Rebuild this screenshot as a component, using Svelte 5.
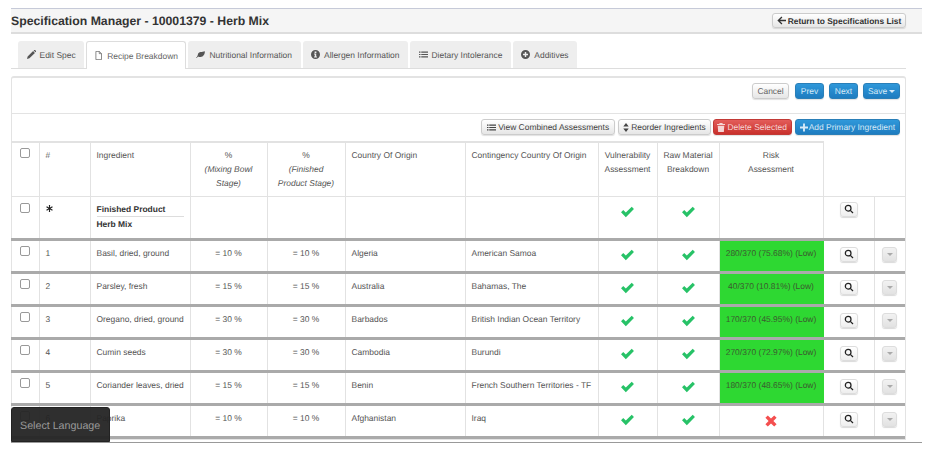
<script>
  const rows = [
    { n: 1, name: 'Basil, dried, ground', p: 10, c: 'Algeria', cc: 'American Samoa', risk: '280/370 (75.68%) (Low)' },
    { n: 2, name: 'Parsley, fresh', p: 15, c: 'Australia', cc: 'Bahamas, The', risk: '40/370 (10.81%) (Low)' },
    { n: 3, name: 'Oregano, dried, ground', p: 30, c: 'Barbados', cc: 'British Indian Ocean Territory', risk: '170/370 (45.95%) (Low)' },
    { n: 4, name: 'Cumin seeds', p: 30, c: 'Cambodia', cc: 'Burundi', risk: '270/370 (72.97%) (Low)' },
    { n: 5, name: 'Coriander leaves, dried', p: 15, c: 'Benin', cc: 'French Southern Territories - TF', risk: '180/370 (48.65%) (Low)' },
    { n: 6, name: 'Paprika', p: 10, c: 'Afghanistan', cc: 'Iraq', risk: null }
  ];
  const tabs = [
    { label: 'Edit Spec', icon: 'pencil' },
    { label: 'Recipe Breakdown', icon: 'file', active: true },
    { label: 'Nutritional Information', icon: 'leaf' },
    { label: 'Allergen Information', icon: 'info' },
    { label: 'Dietary Intolerance', icon: 'list' },
    { label: 'Additives', icon: 'plus' }
  ];
</script>

{#snippet check()}
  <svg class="check" viewBox="0 0 16 13"><path d="M1 6.8 3.4 4.3 6.2 7.1 12.6.8 15 3.3 6.2 12.2Z" /></svg>
{/snippet}
{#snippet search()}
  <svg class="search" viewBox="0 0 12 12"><circle cx="5" cy="5" r="3.4" /><path d="M7.6 7.6 10.8 10.8" /></svg>
{/snippet}
{#snippet list()}
  <svg class="ico" viewBox="0 0 12 10"><path d="M0 1h2v1.5H0zM3 1h9v1.5H3zM0 4.2h2v1.5H0zM3 4.2h9v1.5H3zM0 7.4h2v1.5H0zM3 7.4h9v1.5H3z" /></svg>
{/snippet}
{#snippet tabIcon(name)}
  {#if name === 'pencil'}
    <svg class="ico" viewBox="0 0 10 10"><path d="M0 10 .7 7.3 6.8 1.2 8.8 3.2 2.7 9.3ZM7.4.6 8 0a.8.8 0 0 1 1 0l1 1a.8.8 0 0 1 0 1l-.6.6Z" /></svg>
  {:else if name === 'file'}
    <svg class="ico line" viewBox="0 0 10 12"><path d="M1.5.5h4.5L9 3.5v8H1.5ZM6 .5v3h3" /></svg>
  {:else if name === 'leaf'}
    <svg class="ico" viewBox="0 0 12 9"><path d="M0 8.5C2 7.5 2 6 2.6 4 3.6.8 8 1.5 11.8.3 12 4 10 8 5.6 7.8 4.5 7.8 3.5 7.3 3 7 2.4 7.6 1.2 8.7.4 9Z" /></svg>
  {:else if name === 'info'}
    <svg class="ico" viewBox="0 0 10 10"><path fill-rule="evenodd" d="M5 0a5 5 0 1 1 0 10A5 5 0 0 1 5 0ZM4 1.6v1.6h2V1.6ZM3.4 4v1h.8v2.2h-.8v1h3.2v-1h-.8V4Z" /></svg>
  {:else if name === 'list'}
    {@render list()}
  {:else}
    <svg class="ico" viewBox="0 0 10 10"><path fill-rule="evenodd" d="M5 0a5 5 0 1 1 0 10A5 5 0 0 1 5 0ZM4.2 2.2v2H2.2v1.6h2v2h1.6v-2h2V4.2h-2v-2Z" /></svg>
  {/if}
{/snippet}

<div class="page">
  <header class="head">
    <h1>Specification Manager - 10001379 - Herb Mix</h1>
    <button class="btn ret"><svg class="ico" viewBox="0 0 10 10"><path d="M5 .6 6 1.6 3.4 4.2H10v1.6H3.4L6 8.4 5 9.4.4 5Z" /> </svg> Return to Specifications List</button>
  </header>

  <nav class="tabs">
    {#each tabs as t}
      <div class="tab" class:active={t.active}>{@render tabIcon(t.icon)}{t.label}</div>
    {/each}
  </nav>

  <section class="panel">
    <div class="bar one">
      <button class="btn cancel">Cancel</button>
      <button class="btn blue prev">Prev</button>
      <button class="btn blue next">Next</button>
      <button class="btn blue save">Save <span class="caret"></span></button>
    </div>
    <div class="bar two">
      <button class="btn view">{@render list()} View Combined Assessments</button>
      <button class="btn slim reorder"><svg class="ico sort" viewBox="0 0 6 10"><path d="M3 0 6 3.8H0ZM3 10 0 6.2H6Z" /></svg> Reorder Ingredients</button>
      <button class="btn red slim del"><svg class="ico small" viewBox="0 0 9 10"><path d="M3 0h3l.6 1H9v1.2H0V1h2.4ZM.8 3h7.4l-.5 7H1.3Z" /></svg> Delete Selected</button>
      <button class="btn blue slim tight"><svg class="ico small" viewBox="0 0 10 10"><path d="M3.8 0h2.4v3.8H10v2.4H6.2V10H3.8V6.2H0V3.8h3.8Z" /></svg> Add Primary Ingredient</button>
    </div>

    <table>
      <colgroup>
        <col class="w28" /><col class="w51" /><col class="w100" /><col class="w77" />
        <col class="w78" /><col class="w120" /><col class="w133" /><col class="w59" />
        <col class="w62" /><col class="w104" /><col class="w51" /><col class="w31" />
      </colgroup>
      <thead>
        <tr class="hr">
          <th><span class="cb"></span></th>
          <th>#</th>
          <th>Ingredient</th>
          <th class="c">%<br /><em>(Mixing Bowl<br />Stage)</em></th>
          <th class="c">%<br /><em>(Finished<br />Product Stage)</em></th>
          <th>Country Of Origin</th>
          <th>Contingency Country Of Origin</th>
          <th class="c">Vulnerability<br />Assessment</th>
          <th class="c nar">Raw Material<br />Breakdown</th>
          <th class="c">Risk<br />Assessment</th>
          <th class="notop"></th>
          <th class="notop"></th>
        </tr>
      </thead>
      <tbody>
        <tr class="fin">
          <td><span class="cb"></span></td>
          <td><svg class="star" viewBox="0 0 10 10"><path d="M4.1 0h1.8l-.2 3.6L8.8 1.7l.9 1.6-3.2 1.7 3.2 1.7-.9 1.6-3.1-1.9.2 3.6H4.1l.2-3.6-3.1 1.9-.9-1.6L3.5 5 .3 3.3l.9-1.6 3.1 1.9Z" /></svg></td>
          <td class="bold"><div class="fp">Finished Product</div><div>Herb Mix</div></td>
          <td></td><td></td><td></td><td></td>
          <td class="c">{@render check()}</td>
          <td class="c">{@render check()}</td>
          <td></td>
          <td class="c"><button class="sq">{@render search()}</button></td>
          <td></td>
        </tr>
        {#each rows as r}
          <tr class="row">
            <td><span class="cb"></span></td>
            <td>{r.n}</td>
            <td class="ing">{r.name}</td>
            <td class="c">= {r.p} %</td>
            <td class="c">= {r.p} %</td>
            <td>{r.c}</td>
            <td>{r.cc}</td>
            <td class="c">{@render check()}</td>
            <td class="c">{@render check()}</td>
            {#if r.risk}
              <td class="c risk">{r.risk}</td>
            {:else}
              <td class="c"><svg class="cross" viewBox="0 0 12 12"><path d="M2.8.4 6 3.6 9.2.4 11.6 2.8 8.4 6l3.2 3.2-2.4 2.4L6 8.4 2.8 11.6.4 9.2 3.6 6 .4 2.8Z" /></svg></td>
            {/if}
            <td class="c"><button class="sq">{@render search()}</button></td>
            <td class="c"><button class="sq down"><span class="caret"></span></button></td>
          </tr>
        {/each}
      </tbody>
    </table>
  </section>

  <div class="lang">Select Language</div>
</div>

<style>
  :global(body) { margin: 0; background: #fff; }
  .page {
    position: relative;
    box-sizing: border-box;
    margin: 8px 0 0 11px;
    width: 911px;
    height: 435px;
    overflow: hidden;
    border-top: 1px solid #c6cad8;
    border-bottom: 1px solid #999;
    font: 8.45px/14px "Liberation Sans", Arial, sans-serif;
    text-rendering: geometricPrecision;
    color: #555;
  }
  .head {
    display: flex;
    align-items: flex-start;
    justify-content: space-between;
    box-sizing: border-box;
    height: 25px;
    padding: 4px 16px 0 0;
    background: #f5f5f5;
    border-bottom: 2px solid #ddd;
  }
  h1 { margin: 0; font-size: 12.25px; line-height: 16px; font-weight: bold; color: #333; }
  .btn {
    box-sizing: border-box;
    display: inline-flex;
    align-items: center;
    justify-content: center;
    gap: 2px;
    height: 16px;
    padding: 0 5px;
    border: 1px solid #ccc;
    border-radius: 3px;
    background: linear-gradient(#fff, #e6e6e6);
    box-shadow: 0 1px 1px rgba(0,0,0,.12);
    font: inherit;
    text-rendering: inherit;
    color: #444;
    white-space: nowrap;
  }
  .ret { color: #333; width: 134px; height: 15px; font-size: 8.4px; font-weight: bold; }
  .ico { width: 9px; height: 9px; fill: currentColor; flex: none; }
  .ico.line { fill: none; stroke: currentColor; stroke-width: 1; }
  .ico.sort { width: 6px; }
  .ico.small { width: 8px; }
  .tabs {
    display: flex;
    gap: 2px;
    width: 895px;
    box-sizing: border-box;
    margin-top: 7px;
    height: 28px;
    padding-left: 7px;
    border-bottom: 1px solid #ddd;
  }
  .tab {
    display: flex;
    align-items: center;
    gap: 4px;
    box-sizing: border-box;
    height: 27px;
    padding: 0 8.5px;
    background: #eee;
    border-radius: 3px 3px 0 0;
    color: #555;
    white-space: nowrap;
  }
  .tab.active {
    height: 28px;
    padding: 0 7px;
    background: #fff;
    border: 1px solid #ddd;
    border-bottom: 0;
    color: #666;
  }
  .panel {
    box-sizing: border-box;
    width: 895px;
    margin-top: 7px;
    border: 1px solid #e3e3e3;
    border-top-width: 2px;
    border-radius: 3px 3px 0 0;
  }
  .bar {
    display: flex;
    justify-content: flex-end;
    box-sizing: border-box;
    padding-right: 5px;
    gap: 3px;
  }
  .one { height: 36px; gap: 5px; padding-top: 5px; border-bottom: 1px solid #e3e3e3; }
  .two { height: 27px; padding-top: 5px; }
  .cancel { width: 37px; color: #666; margin-right: 1px; }
  .prev, .next { width: 29px; }
  .save { width: 37px; }
  .blue { background: linear-gradient(#2f98da, #1e7cc0); border-color: #2a7fb8; color: #d5e9f7; }
  .red { background: linear-gradient(#e35d5a, #c9302c); border-color: #c23a36; color: #f5d5d4; }
  .slim { padding: 0 4px; }
  .tight { gap: 1px; }
  .reorder { margin-right: -1px; }
  .del { width: 79px; padding: 0; }
  .caret {
    display: inline-block;
    width: 0;
    border-top: 3px solid currentColor;
    border-left: 3px solid transparent;
    border-right: 3px solid transparent;
  }
  table {
    table-layout: fixed;
    width: 894px;
    border-collapse: collapse;
    margin-left: -1px;
  }
  .w28 { width: 28px; } .w51 { width: 51px; } .w100 { width: 100px; } .w77 { width: 77px; }
  .w78 { width: 78px; } .w120 { width: 120px; } .w133 { width: 133px; } .w59 { width: 59px; }
  .w62 { width: 62px; } .w104 { width: 104px; } .w31 { width: 31px; }
  th, td {
    box-sizing: border-box;
    border: 1px solid #e2e2e2;
    padding: 5px 6px;
    font-weight: normal;
    text-align: left;
    vertical-align: top;
    color: #555;
    white-space: nowrap;
  }
  th { border-top-width: 2px; }
  th.notop { border-top-color: transparent; }
  th:first-child, td:first-child { padding: 5px 0 0 9px; border-left: 0; }
  th:last-child, td:last-child { border-right: 0; }
  th:nth-last-child(2) { border-right-color: transparent; }
  .c { text-align: center; }
  th.nar { padding-left: 0; padding-right: 0; }
  .hr { height: 54px; }
  .hr th { padding-bottom: 0; }
  em { font-style: italic; }
  tbody tr.fin { height: 43px; }
  tbody tr.fin td { border-bottom: 3px solid #aaa; padding-top: 6px; padding-bottom: 0; }
  td.bold { font-weight: bold; color: #333; }
  tbody tr.fin td.bold { padding-top: 5px; }
  .bold .fp { border-bottom: 1px solid #ddd; }
  tbody tr.row { height: 33px; }
  tbody tr.row td { border-bottom: 3px solid #aaa; padding-top: 5px; padding-bottom: 0; }
  .row td.risk { background: #2ed832; border-left-color: #2ed832; border-right-color: #2ed832; color: #3c5a30; padding: 5px 0 0; }
  .cb {
    display: block;
    box-sizing: border-box;
    width: 10px;
    height: 10px;
    border: 1px solid #999;
    border-radius: 2px;
    background: #fff;
  }
  .check { display: block; width: 15px; height: 12px; margin: 3px auto 0; fill: #27c267; }
  .cross { display: block; width: 12px; height: 12px; margin: 4px auto 0; fill: #f44f4f; }
  .star { display: block; width: 7px; height: 7px; fill: #222; margin-top: 2px; }
  .sq {
    display: inline-flex;
    align-items: center;
    justify-content: center;
    box-sizing: border-box;
    width: 18px;
    height: 15px;
    padding: 0;
    margin-top: 1px;
    vertical-align: top;
    border: 1px solid #ddd;
    border-radius: 3px;
    background: linear-gradient(#fff, #eee);
    box-shadow: 0 1px 1px rgba(0,0,0,.15);
    color: #aaa;
  }
  .fin .sq { margin-top: -1px; }
  .sq.down { width: 15px; background: linear-gradient(#f2f2f2, #e2e2e2); }
  .search { width: 10px; height: 10px; fill: none; stroke: #222; stroke-width: 1.5; }
  .lang {
    position: absolute;
    left: 0;
    bottom: 0;
    box-sizing: border-box;
    width: 99px;
    height: 35px;
    padding: 11px 0 0 8px;
    background: rgba(36, 36, 36, .95);
    border: 1px solid #222;
    border-radius: 3px 3px 0 0;
    font-size: 10.7px;
    color: #9a9a9a;
  }
</style>
